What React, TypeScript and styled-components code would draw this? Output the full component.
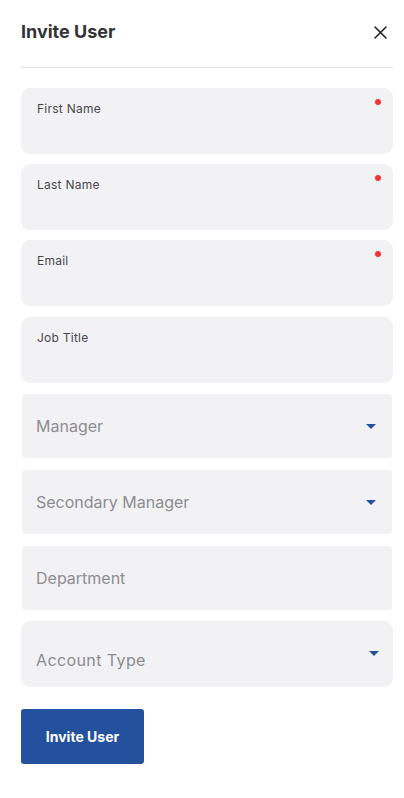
import React from "react";
import styled, { createGlobalStyle } from "styled-components";

const Global = createGlobalStyle`
  html, body { margin: 0; padding: 0; background: #ffffff; }
  body { font-family: Inter, "Noto Sans", sans-serif; -webkit-font-smoothing: antialiased; }
  * { box-sizing: border-box; }
`;

const Panel = styled.div`
  width: 404px;
  padding: 0 11px 0 21px;
`;

const Header = styled.div`
  display: flex;
  align-items: center;
  justify-content: space-between;
  height: 68px;
  padding: 20px 0 23px;
  border-bottom: 1px solid #e2e2e5;
`;

const Title = styled.h1`
  margin: 0;
  font-size: 18px;
  line-height: 24px;
  font-weight: 700;
  color: #333336;
`;

const CloseButton = styled.button`
  border: 0;
  background: none;
  padding: 0;
  width: 24px;
  height: 24px;
  margin-right: 1px;
  display: flex;
  align-items: center;
  justify-content: center;
  cursor: pointer;
`;

const Form = styled.form`
  display: flex;
  flex-direction: column;
  gap: 10.2px;
  margin-top: 20px;
`;

const TextField = styled.div`
  position: relative;
  height: 66px;
  border-radius: 9px;
  background: #f2f2f4;
  padding: 13px 16px 0;
`;

const Label = styled.label`
  display: block;
  font-size: 12px;
  line-height: 16px;
  letter-spacing: 0.25px;
  color: #48484c;
`;

const RequiredDot = styled.span`
  position: absolute;
  top: 11px;
  right: 12px;
  width: 6px;
  height: 6px;
  border-radius: 50%;
  background: #f2343c;
`;

const SelectWrap = styled.div`
  height: 66px;
  padding: 1px;
`;

const SelectBox = styled.div<{ $rounded?: boolean; $low?: boolean }>`
  height: 100%;
  display: flex;
  align-items: ${(p) => (p.$low ? "flex-start" : "center")};
  justify-content: space-between;
  border-radius: ${(p) => (p.$rounded ? "9px" : "4px")};
  background: #f2f2f4;
  padding: ${(p) => (p.$low ? "0 14px 0 15px" : "0 16px 0 14px")};
`;

const Placeholder = styled.span<{ $low?: boolean }>`
  font-size: 16px;
  line-height: 20px;
  color: #8d8d92;
  letter-spacing: ${(p) => (p.$low ? "0.4px" : "0")};
  margin-top: ${(p) => (p.$low ? "29px" : "0")};
`;

const Caret = styled.span<{ $low?: boolean }>`
  width: 0;
  height: 0;
  border-left: 5px solid transparent;
  border-right: 5px solid transparent;
  border-top: 5px solid #24519d;
  margin-top: ${(p) => (p.$low ? "30px" : "1px")};
`;

const SubmitButton = styled.button`
  margin-top: 11px;
  width: 123px;
  height: 55px;
  border: 0;
  border-radius: 3px;
  background: #24519d;
  color: #ffffff;
  font-family: Inter, "Noto Sans", sans-serif;
  font-size: 14px;
  font-weight: 700;
  cursor: pointer;
  align-self: flex-start;
`;

const textFields = [
  { label: "First Name", required: true },
  { label: "Last Name", required: true },
  { label: "Email", required: true },
  { label: "Job Title", required: false },
];

export default function App() {
  return (
    <>
      <Global />
      <Panel>
        <Header>
          <Title>Invite User</Title>
          <CloseButton type="button" aria-label="Close">
            <svg width="13" height="13" viewBox="0 0 13 13">
              <path d="M1 1 L12 12 M12 1 L1 12" stroke="#1b1b1d" strokeWidth="1.5" strokeLinecap="round" />
            </svg>
          </CloseButton>
        </Header>
        <Form onSubmit={(e) => e.preventDefault()}>
          {textFields.map((f) => (
            <TextField key={f.label}>
              <Label>{f.label}</Label>
              {f.required && <RequiredDot />}
            </TextField>
          ))}
          <SelectWrap>
            <SelectBox>
              <Placeholder>Manager</Placeholder>
              <Caret />
            </SelectBox>
          </SelectWrap>
          <SelectWrap>
            <SelectBox>
              <Placeholder>Secondary Manager</Placeholder>
              <Caret />
            </SelectBox>
          </SelectWrap>
          <SelectWrap>
            <SelectBox>
              <Placeholder>Department</Placeholder>
            </SelectBox>
          </SelectWrap>
          <SelectBox $rounded $low style={{ height: 66 }}>
            <Placeholder $low>Account Type</Placeholder>
            <Caret $low />
          </SelectBox>
          <SubmitButton type="submit">Invite User</SubmitButton>
        </Form>
      </Panel>
    </>
  );
}
